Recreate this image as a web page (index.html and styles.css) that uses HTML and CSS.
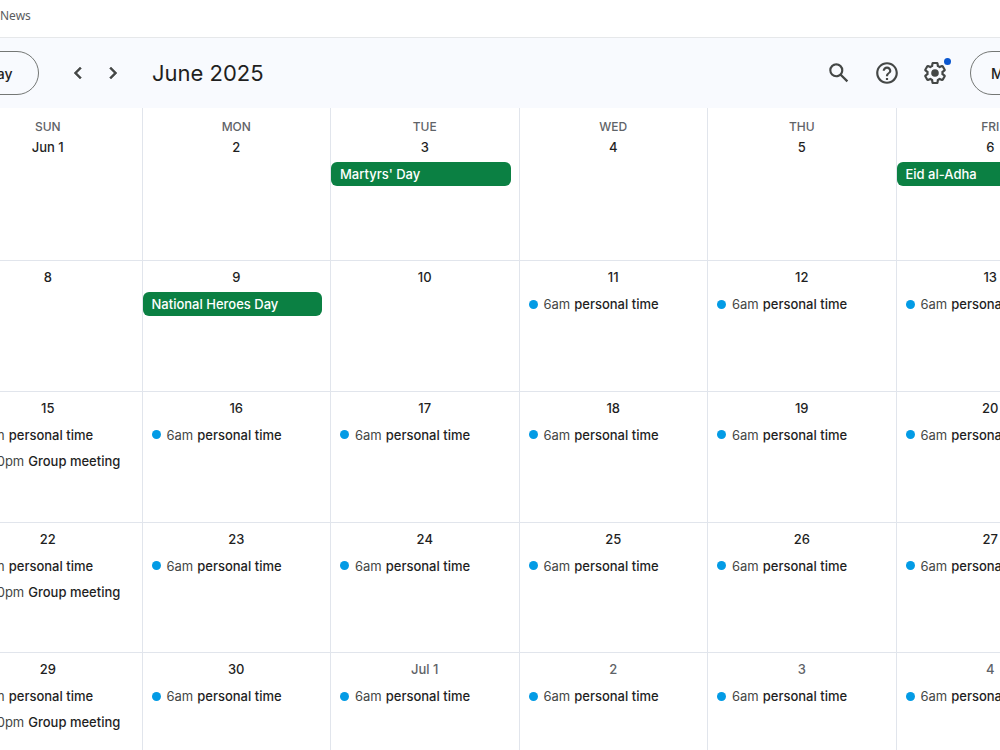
FILE: index.html
```html
<!DOCTYPE html>
<html lang="en">
<head>
  <meta charset="UTF-8">
  <meta name="viewport" content="width=device-width, initial-scale=1.0">
  <title>Calendar - June 2025</title>
  <link rel="stylesheet" href="styles.css">
</head>
<body>
  <!-- Bookmarks bar -->
  <nav class="bookmarks">
    <a href="#">News</a>
  </nav>

  <!-- Toolbar -->
  <header class="toolbar">
    <button class="pill today" type="button">Today</button>
    <button class="icon-btn arrow" type="button" aria-label="Previous month">
      <svg width="24" height="24" viewBox="0 0 24 24"><path d="M15.41 7.41 14 6l-6 6 6 6 1.41-1.41L10.83 12z"/></svg>
    </button>
    <button class="icon-btn arrow" type="button" aria-label="Next month">
      <svg width="24" height="24" viewBox="0 0 24 24"><path d="M10 6 8.59 7.41 13.17 12l-4.58 4.59L10 18l6-6z"/></svg>
    </button>
    <h1>June 2025</h1>
    <div class="tools">
      <button class="icon-btn" type="button" aria-label="Search">
        <svg width="26" height="26" viewBox="0 0 24 24"><path d="M20.49 19l-5.73-5.73C15.53 12.2 16 10.91 16 9.5A6.5 6.5 0 1 0 9.5 16c1.41 0 2.7-.47 3.77-1.24L19 20.49 20.49 19zM5 9.5C5 7.01 7.01 5 9.5 5S14 7.01 14 9.5 11.99 14 9.5 14 5 11.99 5 9.5z"/></svg>
      </button>
      <button class="icon-btn" type="button" aria-label="Support">
        <svg width="26" height="26" viewBox="0 0 24 24"><path d="M11 16.500h2v2h-2v-2zm1-14.500C6.480 2 2 6.480 2 12s4.480 10 10 10 10-4.480 10-10S17.520 2 12 2zm0 18c-4.410 0-8-3.590-8-8s3.590-8 8-8 8 3.590 8 8-3.590 8-8 8zm0-14c-2.210 0-4 1.790-4 4h2c0-1.100.9-2 2-2s2 .9 2 2c0 2-3 1.750-3 5h2c0-2.250 3-2.500 3-5 0-2.210-1.790-4-4-4z"/></svg>
      </button>
      <button class="icon-btn settings" type="button" aria-label="Settings">
        <svg width="26" height="26" viewBox="0 0 24 24"><path d="M13.85 22.25h-3.7c-.74 0-1.36-.54-1.45-1.27l-.27-1.89c-.27-.14-.53-.29-.79-.46l-1.8.72c-.7.26-1.47-.03-1.81-.65L2.2 15.53c-.35-.66-.2-1.44.36-1.88l1.53-1.19c-.01-.15-.02-.3-.02-.46 0-.15.01-.31.02-.46l-1.52-1.19c-.59-.45-.74-1.26-.37-1.88l1.85-3.19c.34-.62 1.11-.9 1.79-.63l1.81.73c.26-.17.52-.32.78-.46l.27-1.91c.09-.7.71-1.25 1.44-1.25h3.7c.74 0 1.36.54 1.45 1.27l.27 1.89c.27.14.53.29.79.46l1.8-.72c.71-.26 1.48.03 1.82.65l1.84 3.18c.36.66.2 1.44-.36 1.88l-1.52 1.19c.01.15.02.3.02.46s-.01.31-.02.46l1.52 1.19c.56.45.72 1.23.37 1.86l-1.86 3.22c-.34.62-1.11.9-1.8.63l-1.8-.72c-.26.17-.52.32-.78.46l-.27 1.91c-.1.68-.72 1.22-1.46 1.22zm-3.23-2h2.76l.37-2.55.53-.22c.44-.18.88-.44 1.34-.78l.45-.34 2.38.96 1.38-2.4-2.03-1.58.07-.56c.03-.26.06-.51.06-.78s-.03-.53-.06-.78l-.07-.56 2.03-1.58-1.39-2.4-2.39.96-.45-.35c-.42-.32-.87-.58-1.33-.77l-.52-.22-.37-2.55h-2.76l-.37 2.55-.53.21c-.44.19-.88.44-1.34.79l-.45.33-2.38-.95-1.39 2.39 2.03 1.58-.07.56a7 7 0 0 0-.06.79c0 .26.02.53.06.78l.07.56-2.03 1.58 1.38 2.4 2.39-.96.45.35c.43.33.86.58 1.33.77l.53.22.38 2.55z"/><circle cx="12" cy="12" r="3.5"/></svg>
        <span class="badge"></span>
      </button>
    </div>
    <button class="pill view" type="button">Month</button>
  </header>

  <!-- Month grid -->
  <main class="month">
    <div class="day first"><p class="weekday">SUN</p><p class="date">Jun 1</p></div>
    <div class="day first"><p class="weekday">MON</p><p class="date">2</p></div>
    <div class="day first"><p class="weekday">TUE</p><p class="date">3</p>
      <button class="holiday" type="button">Martyrs' Day</button>
    </div>
    <div class="day first"><p class="weekday">WED</p><p class="date">4</p></div>
    <div class="day first"><p class="weekday">THU</p><p class="date">5</p></div>
    <div class="day first"><p class="weekday">FRI</p><p class="date">6</p>
      <button class="holiday" type="button">Eid al-Adha</button>
    </div>

    <div class="day"><p class="date">8</p></div>
    <div class="day"><p class="date">9</p>
      <button class="holiday" type="button">National Heroes Day</button>
    </div>
    <div class="day"><p class="date">10</p></div>
    <div class="day"><p class="date">11</p>
      <button class="event" type="button"><span class="time">6am</span>personal time</button>
    </div>
    <div class="day"><p class="date">12</p>
      <button class="event" type="button"><span class="time">6am</span>personal time</button>
    </div>
    <div class="day"><p class="date">13</p>
      <button class="event" type="button"><span class="time">6am</span>personal time</button>
    </div>

    <div class="day"><p class="date">15</p>
      <button class="event" type="button"><span class="time">6am</span>personal time</button>
      <button class="event" type="button"><span class="time">7:30pm</span>Group meeting</button>
    </div>
    <div class="day"><p class="date">16</p>
      <button class="event" type="button"><span class="time">6am</span>personal time</button>
    </div>
    <div class="day"><p class="date">17</p>
      <button class="event" type="button"><span class="time">6am</span>personal time</button>
    </div>
    <div class="day"><p class="date">18</p>
      <button class="event" type="button"><span class="time">6am</span>personal time</button>
    </div>
    <div class="day"><p class="date">19</p>
      <button class="event" type="button"><span class="time">6am</span>personal time</button>
    </div>
    <div class="day"><p class="date">20</p>
      <button class="event" type="button"><span class="time">6am</span>personal time</button>
    </div>

    <div class="day"><p class="date">22</p>
      <button class="event" type="button"><span class="time">6am</span>personal time</button>
      <button class="event" type="button"><span class="time">7:30pm</span>Group meeting</button>
    </div>
    <div class="day"><p class="date">23</p>
      <button class="event" type="button"><span class="time">6am</span>personal time</button>
    </div>
    <div class="day"><p class="date">24</p>
      <button class="event" type="button"><span class="time">6am</span>personal time</button>
    </div>
    <div class="day"><p class="date">25</p>
      <button class="event" type="button"><span class="time">6am</span>personal time</button>
    </div>
    <div class="day"><p class="date">26</p>
      <button class="event" type="button"><span class="time">6am</span>personal time</button>
    </div>
    <div class="day"><p class="date">27</p>
      <button class="event" type="button"><span class="time">6am</span>personal time</button>
    </div>

    <div class="day"><p class="date">29</p>
      <button class="event" type="button"><span class="time">6am</span>personal time</button>
      <button class="event" type="button"><span class="time">7:30pm</span>Group meeting</button>
    </div>
    <div class="day"><p class="date">30</p>
      <button class="event" type="button"><span class="time">6am</span>personal time</button>
    </div>
    <div class="day other"><p class="date">Jul 1</p>
      <button class="event" type="button"><span class="time">6am</span>personal time</button>
    </div>
    <div class="day other"><p class="date">2</p>
      <button class="event" type="button"><span class="time">6am</span>personal time</button>
    </div>
    <div class="day other"><p class="date">3</p>
      <button class="event" type="button"><span class="time">6am</span>personal time</button>
    </div>
    <div class="day other"><p class="date">4</p>
      <button class="event" type="button"><span class="time">6am</span>personal time</button>
    </div>
  </main>
</body>
</html>
```
FILE: styles.css
```css
* {
  box-sizing: border-box;
}

body {
  display: flex;
  flex-direction: column;
  height: 100vh;
  margin: 0;
  overflow: hidden;
  background-color: #fff;
  color: #1f1f1f;
  font-family: Inter, "Liberation Sans", sans-serif;
  font-size: 13px;
}

button {
  margin: 0;
  padding: 0;
  border: none;
  background: none;
  color: inherit;
  font: inherit;
  cursor: pointer;
}

/* Bookmarks bar */
.bookmarks {
  flex: none;
  height: 38px;
  padding-top: 7px;
  border-bottom: 1px solid #e6e8ea;
  font-family: "Noto Sans", sans-serif;
  font-size: 12px;
  line-height: 18px;
}

.bookmarks a {
  color: #5a5c5e;
  text-decoration: none;
}

/* Toolbar, runs past both sides of the window */
.toolbar {
  display: flex;
  flex: none;
  align-items: center;
  height: 70px;
  margin: 0 -90px 0 -55px;
  background-color: #f8fafe;
}

.pill {
  height: 44px;
  border: 1px solid #747775;
  border-radius: 22px;
  font-size: 14px;
  font-weight: 500;
}

.today {
  width: 94px;
}

.view {
  width: 120px;
  padding-left: 20px;
  text-align: left;
}

.icon-btn {
  display: flex;
  align-items: center;
  justify-content: center;
  position: relative;
  height: 44px;
  fill: #444746;
}

.arrow {
  width: 35px;
}

.arrow path {
  stroke: #444746;
  stroke-width: 0.5;
}

.today + .arrow {
  margin-left: 21px;
}

.toolbar h1 {
  margin: 0 0 0 22px;
  font-size: 22px;
  font-weight: 400;
}

.tools {
  display: flex;
  gap: 22px;
  margin: 0 22px 0 auto;
}

.badge {
  position: absolute;
  top: 7px;
  right: -3px;
  width: 7px;
  height: 7px;
  border-radius: 50%;
  background-color: #0b57d0;
}

/* Month grid */
.month {
  display: grid;
  flex: 1;
  grid-template-columns: repeat(6, 1fr);
  grid-template-rows: 152px repeat(4, 1fr);
  margin: 0 -84px -33px -47px;
}

.day {
  padding-top: 6px;
  border-top: 1px solid #e1e5ec;
  border-left: 1px solid #e1e5ec;
}

.first {
  padding-top: 9px;
  border-top: none;
}

.day p {
  margin: 0;
  line-height: 20px;
  text-align: center;
}

.day .weekday {
  color: #5f6368;
  font-size: 12px;
  font-weight: 500;
}

.date {
  font-weight: 500;
}

.other .date {
  color: #5f6368;
}

.holiday,
.event {
  display: flex;
  align-items: center;
  width: calc(100% - 8px);
  height: 24px;
  padding-left: 9px;
  font-weight: 500;
  white-space: nowrap;
}

.date + button {
  margin-top: 5px;
}

.event + .event {
  margin-top: 2px;
}

.holiday {
  border-radius: 6px;
  background-color: #0b8043;
  color: #fff;
}

.event::before {
  content: "";
  width: 9px;
  height: 9px;
  margin-right: 6px;
  border-radius: 50%;
  background-color: #039be5;
}

.time {
  margin-right: 4px;
  color: #444746;
  font-weight: 400;
}
```
